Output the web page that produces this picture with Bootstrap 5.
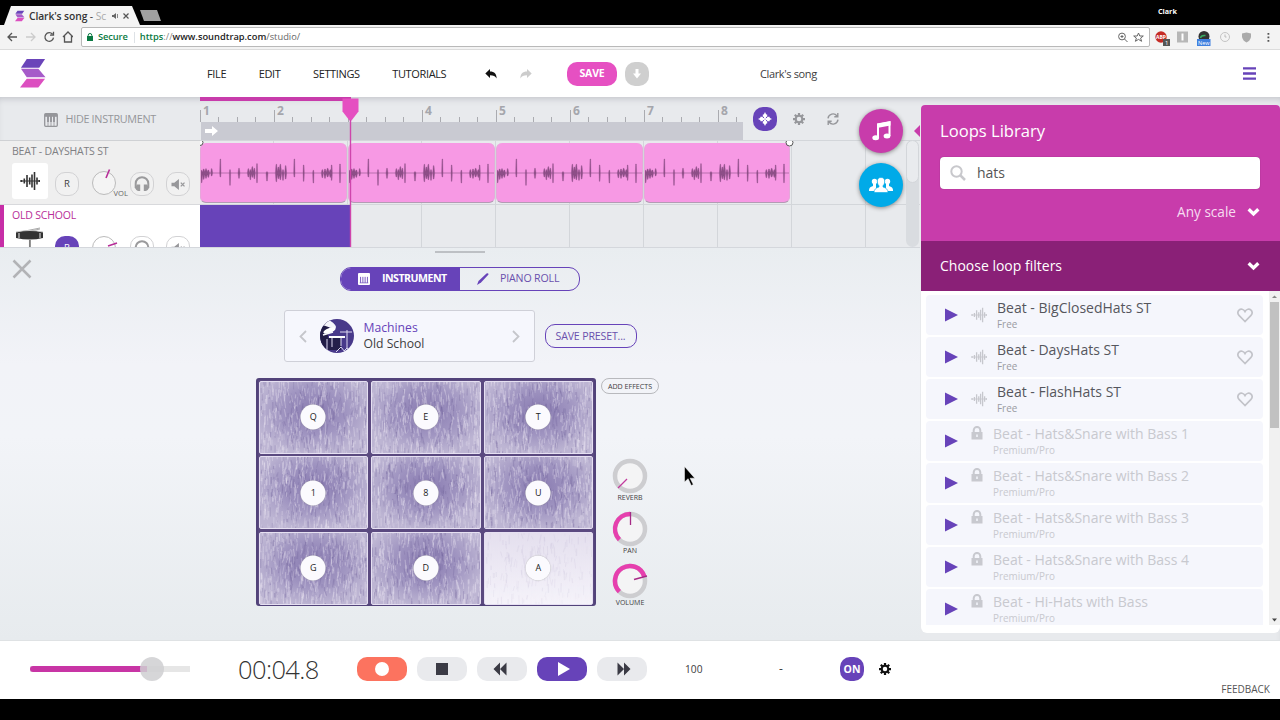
<!DOCTYPE html>
<html lang="en">
<head>
<meta charset="utf-8">
<meta name="viewport" content="width=device-width, initial-scale=1">
<title>Clark's song - Soundtrap</title>
<link href="https://cdn.jsdelivr.net/npm/bootstrap@5.3.0/dist/css/bootstrap.min.css" rel="stylesheet">
<style>
:root{--violet:#6743b9;--magenta:#c83cab;--pink:#e650c2;}
body{width:1280px;height:720px;overflow:hidden;background:#e8eaed;font-family:"Open Sans",sans-serif;font-size:12px;line-height:1.2;color:#3d3d40}
svg{display:block;flex:none}
.tabstrip{height:25px;background:#000}
.tabshape{width:136px;height:19px;margin-left:4px;background:#f4f4f4;clip-path:polygon(7px 0,128px 0,136px 100%,0 100%);padding-left:11px;font:600 10.3px "Open Sans",sans-serif;color:#333}
.newtab{width:21px;height:11px;background:#a0a0a0;clip-path:polygon(0 0,17px 0,21px 100%,4px 100%);margin-bottom:4px}
.addressbar{height:25px;background:#f3f3f3;border-bottom:1px solid #dcdcdc;padding-left:7px}
.omnibox{width:1069px;height:20px;margin:0 0 0 8px;background:#fff;border:1px solid #b9b9b9;border-radius:2px;font-weight:600;font-size:9.3px;padding:0 5px 0 5px}
.apphead{height:47px;background:#fff}
.apphead nav{width:438px;padding-left:160px;gap:32.5px;color:#222}
.apphead nav,.songname{font-size:11px;letter-spacing:-.36px}
.workspace{height:543px;background:#e8eaed;box-shadow:inset 0 5px 6px -3px #c4c6cc}
.timeline{height:150px;overflow:hidden}
.trackcol{width:200px}
.hide-inst{height:44px;border-bottom:1px solid #cfd1d4;padding:2px 0 0 44px;color:#95969a;gap:7.5px;font-size:10.8px;letter-spacing:-.3px}
.trackrow{height:64px;background:#efefef;border-bottom:1px solid #d8d9dc;padding:4px 0 0 12px}
.trackname{font-size:10.5px;letter-spacing:-.2px;height:14px;color:#808083}
.tile{width:36px;height:36px;background:#fff;border-radius:3px}
.ctl{width:24px;height:24px;border:1px solid #d2d2d4;border-radius:10px;background:#f1f1f1;font-size:9.5px}
.ruler{width:543px;height:25px}
.bar-cell{width:74px;height:25px;flex:none;font-weight:700;font-size:12px;color:#a5a6ac;padding:7px 0 0 3px;background:linear-gradient(#aaabb0,#aaabb0) 0 13px/1px 12px no-repeat,linear-gradient(#aaabb0,#aaabb0) 18px 20px/1px 5px no-repeat,linear-gradient(#aaabb0,#aaabb0) 37px 20px/1px 5px no-repeat,linear-gradient(#aaabb0,#aaabb0) 55px 20px/1px 5px no-repeat}
.loopband{width:542px;height:18px;margin-left:1px;background:#c9cad2;padding-left:4px}
.lanes{height:107px;border-top:1px solid #d3d6da;background:repeating-linear-gradient(90deg,transparent 0 73px,#d3d6da 73px 74px)}
.lane{height:64px;border-bottom:1px solid #d3d6da}
.clip{width:147px;height:60px;border-radius:6px;background:#f799e4;border:1px solid #e6a7da;border-bottom:1px solid #b39bb4;border-top:0;margin:2px 1px 0 0;flex:none;overflow:hidden}
.clip:last-child{width:146px}
.region{width:151px;height:42px;background:var(--violet)}
.fab{width:44px;height:44px;border-radius:50%;box-shadow:0 1px 4px #888}
.lane-scroll{left:706px;top:43px;width:13px;height:107px;border-radius:7px;background:#d9dce0}
.lane-thumb{height:43px;border-radius:7px;background:#e9ebee;border:1px solid #d3d6da}
.instrument{height:393px;border-top:1px solid #d4d7dc;background:linear-gradient(#e9edf0,#f2f3f8 30%,#f2f4f8 48%,#e7ebee)}
.grip{width:50px;height:2px;background:#bdc0c4;margin-top:3px}
.viewtabs{width:240px;height:24px;border:1px solid var(--violet);border-radius:11px;margin-top:13.5px;overflow:hidden;font-size:10.6px;color:#6a50ad}
.viewtabs>div{width:120px;letter-spacing:-.15px}
.viewtabs>.fw-bold{letter-spacing:-.5px}
.preset{width:251px;height:52px;border:1.5px solid #cfd0d8;border-radius:3px;background:#f6f7fd;font-size:12.2px}
.pillbtn{width:92px;height:24px;border:1px solid var(--violet);border-radius:10px;color:#6a50ad;font-size:10.6px;letter-spacing:-.15px}
.padgrid{width:340px;height:228px;display:grid;grid-template-columns:repeat(3,109.5px);grid-template-rows:repeat(3,73px);gap:2.6px 3px;background:#5b4a80;border:2px solid #52437a;border-radius:3px;padding:.5px .5px}
.pad{border:1px solid #e6e0f2;border-radius:2px;overflow:hidden}
.pad span{width:25px;height:25px;background:#fbfafe;border-radius:50%;font-size:9px;color:#222;box-shadow:0 0 1px #999}
.fx{width:58px;height:16px;border:1px solid #b8b9bd;border-radius:8px;font-size:7.1px}
.knob{width:36px;font-size:7px}
.drawer{width:359px;height:528px;border-radius:4px 4px 6px 6px;background:#fff;margin:8px 0 0 1px;overflow:hidden}
.drawer-head{height:136px;background:var(--magenta);color:#fff;padding:16px 20px 0 19px}
.searchbox{width:320px;height:32px;background:#fff;border-radius:4px;color:#555;font-size:14px;padding-left:10px;gap:11px;margin-top:16px;box-shadow:0 0 1px #6b2560}
.drawer-filter{height:50px;background:#8a2077;color:#fff;font-size:14px;padding:0 20px 0 19px}
.looplist{height:334px;padding:4px 0 0 5px;overflow:hidden;gap:2px}
.loopitem{width:337px;height:40px;flex:none;background:#f5f6fc;border-radius:4px;padding-left:19px;padding-right:10.5px}
.looptitle{font-size:14px;line-height:17px;color:#55565d}
.loopmeta{font-size:9.9px;line-height:13px;color:#999ba2;margin-top:1.5px}
.locked .looptitle,.locked .loopmeta{color:#c8c9cf}
.vscroll{width:11px;height:334px;background:#f1f1f1}
.vthumb{width:9px;height:126px;background:#c1c1c1}
.transport{height:59px;background:#fff;border-top:1px solid #dfe2e4;padding-bottom:2px}
.slider{width:160px;height:6px;background:#e6e6e6}
.slider i{display:block;width:117px;height:6px;background:#c835a5;border-radius:3px 0 0 3px}
.slider b{left:110px;top:-9px;width:24px;height:24px;border-radius:50%;background:#cfcfd1d9}
.clock{width:80px;font-size:25.5px;font-weight:300;color:#333;letter-spacing:-.6px}
.tbtn{width:50px;height:24px;border-radius:10px;background:#e9eaed}
.violet{background:var(--violet)!important;color:#fff}
.footer-bar{height:21px;background:#000}
</style>
</head>
<body class="d-flex flex-column">
<svg width="0" height="0" class="position-absolute">
 <defs>
  <symbol id="keys" viewBox="0 0 14 14"><rect x=".7" y=".7" width="12.600" height="12.600" rx="1" fill="none" stroke="currentColor" stroke-width="1.300"/><path d="M1 1h12v2.800H1Z" fill="currentColor"/><path d="M4 3v6M7 3v6M10 3v6" stroke="currentColor" stroke-width="1.900"/><path d="M4 9v4M7 9v4M10 9v4" stroke="currentColor" stroke-width=".8"/></symbol>
  <symbol id="keysolid" viewBox="0 0 14 14"><rect width="14" height="14" rx="1.200" fill="#fff"/><path d="M3 4.500v7M5.700 4.500v7M8.300 4.500v7M11 4.500v7" stroke="#6743b9" stroke-width="1"/><path d="M2 11.500h10" stroke="#6743b9" stroke-width=".8"/></symbol>
  <symbol id="wave" viewBox="0 0 20 20"><path d="M0 10h20" stroke="currentColor" stroke-width="1"/><path d="M1.500 9v2M4.300 7.500v5M7 4v12M9.700 6.500v7M12 3.500v13M14.500 1v18M17 6.500v7M19.200 9v2" stroke="currentColor" stroke-width="1.600" fill="none"/></symbol>
  <symbol id="phones" viewBox="0 0 16 16"><path d="M1.700 12V7.500a6.300 6.300 0 0 1 12.600 0V12" fill="none" stroke="#9a9a9c" stroke-width="2"/><path d="M3 8.500h3.200V15H4q-1.500 0-3-3ZM9.800 8.500H13l2 3.500q-1.500 3-3 3H9.800Z" fill="#9a9a9c"/></symbol>
  <symbol id="mute" viewBox="0 0 16 14"><path d="M1 5h3l5-4v12L4 9H1Z" fill="#97979a"/><path d="m11 5 4 4m0-4-4 4" stroke="#97979a" stroke-width="1.400"/></symbol>
  <symbol id="chev" viewBox="0 0 14 10"><path d="m1.800 2 5.200 5 5.200-5" fill="none" stroke="currentColor" stroke-width="3.600"/></symbol>
  <symbol id="gear" viewBox="0 0 16 16"><path d="M8 0v16M0 8h16M2.400 2.400l11.200 11.200M13.600 2.400 2.400 13.600" stroke="currentColor" stroke-width="3"/><circle cx="8" cy="8" r="5.800" fill="currentColor"/><circle cx="8" cy="8" r="3" fill="var(--hole)"/></symbol>
  <symbol id="lock" viewBox="0 0 12 14"><path d="M.5 6h11v7.500H.5Z" fill="#c8c9cf"/><path d="M2.700 6V4.200a3.300 3.300 0 0 1 6.600 0V6" fill="none" stroke="#c8c9cf" stroke-width="2"/><path d="M6 8.500v2.500" stroke="#f5f6fc" stroke-width="1.500"/></symbol>
  <symbol id="heart" viewBox="0 0 16 15"><path d="M8 13.500 2 7.300a3.500 3.500 0 0 1 0-5.200c1.700-1.500 4.500-1.200 6 1.400 1.500-2.600 4.300-2.900 6-1.400a3.500 3.500 0 0 1 0 5.200Z" fill="none" stroke="#c2c3c9" stroke-width="1.700"/></symbol>
  <symbol id="rew" viewBox="0 0 14 14"><path d="M7 .5v13L.5 7ZM13.500.5v13L7 7Z" fill="#3b3b45"/></symbol>
  <symbol id="reply" viewBox="0 0 12 10"><path d="M5 0v2.500c4.500 0 6.600 2.300 6.600 7-1.200-2.500-3.200-3.200-6.600-3.200V9L.3 4.400Z" fill="currentColor"/></symbol>
  <symbol id="brand" viewBox="0 0 28 30"><path d="M7 0h19l-6 9H1Z" fill="#6a44b9"/><path d="M1 10h18l7.500 9H7Z" fill="#a65bc9"/><path d="M7 20.500h19L19 29.500H0Z" fill="#dc4fc0"/></symbol>
 </defs>
</svg>

<div class="tabstrip d-flex align-items-end">
 <div class="tabshape d-flex align-items-center">
  <svg width="10" height="12"><use href="#brand"/></svg>
  <span class="text-nowrap" style="margin-left:4px;letter-spacing:-.1px">Clark's song <span class="fw-normal">-</span> <span class="fw-normal" style="color:#aaa">Sc</span></span>
  <svg class="ms-auto" width="18" height="8" viewBox="0 0 18 8"><path d="M0 3h1.500L4 1v6L1.500 5H0Z" fill="#666"/><path d="M5.500 2v4" stroke="#888"/><path d="m11.500 1.500 5 5m0-5-5 5" stroke="#555" stroke-width="1.200"/></svg>
  <span style="width:10px"></span>
 </div>
 <div class="newtab"></div>
 <div class="text-white fw-bold align-self-center" style="margin-left:997px;font-size:7.200px;margin-top:-2px">Clark</div>
</div>

<div class="addressbar d-flex align-items-center">
 <svg width="66" height="14" viewBox="0 0 66 14" fill="none" stroke="#555" stroke-width="1.300"><path d="M10 7H1m4-4L1 7l4 4"/><path d="M19 7h9m-4-4 4 4-4 4" stroke="#ccc"/><path d="M45.500 4.200a4.300 4.300 0 1 0 1 3.500M46.500 1.700v3.500H43"/><path d="m56 7 5-5 5 5M57.500 6v6h7V6"/></svg>
 <div class="omnibox d-flex align-items-center">
  <svg width="6" height="8" viewBox="0 0 6 8"><path d="M0 3h6v5H0Z" fill="#0b7a43"/><path d="M1.200 3V2.300a1.800 1.800 0 0 1 3.600 0V3" stroke="#0b7a43" fill="none"/></svg>
  <span style="color:#0b7a43;margin-left:5px;letter-spacing:-.1px">Secure</span><span class="border-start" style="height:11px;margin:0 5px 0 6px"></span><span style="color:#0b7a43">https</span><span class="fw-normal" style="color:#888">://</span><span style="color:#222">www.soundtrap.com</span><span class="fw-normal" style="color:#666">/studio/</span>
  <svg class="ms-auto" width="26" height="11" viewBox="0 0 26 11" fill="none" stroke="#666"><circle cx="4" cy="4.500" r="3.400"/><path d="m6.500 7 3 3M4 3v3M2.500 4.500h3M20.500 1l1.300 3h3.500l-2.700 2.100 1 3.200-3.100-1.900-3.100 1.900 1-3.200-2.700-2.100h3.500Z"/></svg>
 </div>
 <svg style="margin-left:3px" width="122" height="20" viewBox="0 0 122 20"><circle cx="8" cy="10" r="5.700" fill="#c52b25"/><text x="3" y="12" font-size="5" font-weight="bold" fill="#fff">ABP</text><path d="M10 12h7v7h-7Z" fill="#555"/><text x="12" y="18" font-size="6" fill="#fff">1</text><path d="M24 4.500h11v11H24Z" fill="#b7b7b7"/><path d="M29.500 6.500v7" stroke="#fff" stroke-width="2"/><circle cx="51" cy="9.500" r="5.500" fill="#333"/><path d="M47.500 11q.5-3 5-2.500" stroke="#37ae62" stroke-width="1.500" fill="none"/><path d="M44 12h13.500v7H44Z" fill="#3f80df"/><text x="45" y="17.500" font-size="5.500" fill="#fff">New</text><circle cx="72" cy="10" r="4.500" fill="none" stroke="#c4c4c4"/><path d="M72 7.500V10h1.500" stroke="#bbb" fill="none"/><path d="M93.500 5.500 98 6.500V10q-1 4-4.500 5.500Q90 14 89 10V6.500Z" fill="#aaa"/><path d="M114.500 6h1.800v1.800h-1.800Zm0 3.500h1.800v1.800h-1.800Zm0 3.500h1.800v1.800h-1.800Z" fill="#555"/></svg>
</div>

<header class="apphead d-flex align-items-center">
 <svg style="margin-left:20px" width="27" height="29"><use href="#brand"/></svg>
 <nav class="d-flex"><span>FILE</span><span>EDIT</span><span>SETTINGS</span><span>TUTORIALS</span></nav>
 <svg style="color:#111" width="12" height="10"><use href="#reply"/></svg>
 <svg style="margin-left:23px;color:#ccc;transform:scaleX(-1)" width="12" height="10"><use href="#reply"/></svg>
 <div class="d-flex align-items-center justify-content-center text-white fw-bold" style="width:50px;height:24px;border-radius:10px;background:var(--pink);margin-left:35px;font-size:10.500px;letter-spacing:-.2px">SAVE</div>
 <div class="d-flex align-items-center justify-content-center" style="width:24px;height:24px;border-radius:10px;background:#cfcfcf;margin-left:8px"><svg width="8" height="10" viewBox="0 0 8 10"><path d="M2.500 0h3v4.500H8L4 9.500 0 4.500h2.500Z" fill="#fff"/></svg></div>
 <span class="songname" style="margin-left:111px">Clark's song</span>
 <svg class="ms-auto me-4" width="13" height="13" viewBox="0 0 13 13"><path d="M0 1.300h13M0 6.500h13M0 11.700h13" stroke="#6743b9" stroke-width="2.300"/></svg>
</header>

<div class="workspace d-flex">
 <main class="position-relative" style="width:920px">
  <section class="timeline d-flex">
   <div class="trackcol">
    <div class="hide-inst d-flex align-items-center"><svg width="14" height="14"><use href="#keys"/></svg><span>HIDE INSTRUMENT</span></div>
    <div class="trackrow">
     <div class="trackname">BEAT - DAYSHATS ST</div>
     <div class="d-flex mt-1">
      <div class="tile d-flex align-items-center justify-content-center" style="color:#333"><svg width="20" height="20"><use href="#wave"/></svg></div>
      <div class="ctl d-flex align-items-center justify-content-center" style="margin:9px 0 0 7px">R</div>
      <svg style="margin:5px 0 0 12px" width="39" height="30" viewBox="0 0 39 30"><circle cx="13" cy="15" r="11.500" fill="#f4f4f4" stroke="#bbb"/><path d="m15 10 3.500-8.500" stroke="#b72d98" stroke-width="1.600"/><text x="22.500" y="27.500" font-size="7.600" fill="#666">VOL</text></svg>
      <div class="ctl d-flex align-items-center justify-content-center" style="margin-top:9px"><svg width="16" height="16"><use href="#phones"/></svg></div>
      <div class="ctl d-flex align-items-center justify-content-center" style="margin:9px 0 0 12px"><svg width="16" height="13"><use href="#mute"/></svg></div>
     </div>
    </div>
    <div class="trackrow" style="background:#fff;border-left:4px solid #c72ea7;padding-left:8px">
     <div class="trackname" style="color:#b72d98">OLD SCHOOL</div>
     <div class="d-flex mt-1">
      <svg width="36" height="36" viewBox="0 0 36 36"><path d="m8 5 20-4M14 5l14-3" stroke="#aaa"/><path d="M4 5q14-3 27 0v6q-13 3-27 0Z" fill="#333"/><path d="M4 5q14-3 27 0M17.500 13v12M7 6v5M28 6v5" stroke="#ccc" stroke-width="1.200" fill="none"/><path d="M18 13v12" stroke="#333"/></svg>
      <div class="ctl violet d-flex align-items-center justify-content-center" style="margin:9px 0 0 7px;border:0">R</div>
      <svg style="margin:5px 0 0 12px" width="39" height="30" viewBox="0 0 39 30"><circle cx="13" cy="16" r="11.500" fill="#fff" stroke="#bbb"/><path d="m17 14 9-3" stroke="#b72d98" stroke-width="1.600"/></svg>
      <div class="ctl bg-white d-flex align-items-center justify-content-center" style="margin-top:9px"><svg width="16" height="16"><use href="#phones"/></svg></div>
      <div class="ctl bg-white d-flex align-items-center justify-content-center" style="margin:9px 0 0 12px"><svg width="16" height="13"><use href="#mute"/></svg></div>
     </div>
    </div>
   </div>
   <div class="position-relative" style="width:720px">
    <div class="d-flex">
     <div>
      <div class="ruler d-flex overflow-hidden"><div class="bar-cell">1</div><div class="bar-cell">2</div><div class="bar-cell"></div><div class="bar-cell">4</div><div class="bar-cell">5</div><div class="bar-cell">6</div><div class="bar-cell">7</div><div class="bar-cell">8</div></div>
      <div class="loopband d-flex align-items-center"><svg width="13" height="10" viewBox="0 0 13 10"><path d="M0 3h7V0l6 5-6 5V7H0Z" fill="#fff"/></svg></div>
     </div>
     <div class="d-flex align-items-center" style="padding:1px 0 0 10px;color:#96979b;--hole:#e8eaed">
      <div class="violet d-flex align-items-center justify-content-center" style="width:24px;height:24px;border-radius:10px"><svg width="14" height="14" viewBox="0 0 14 14"><path d="m7 0 2.300 4.700L14 7 9.300 9.300 7 14 4.700 9.300 0 7l4.700-2.300Z" fill="#fff"/><path d="M3.200 4.800v4.400M10.800 4.800v4.400M4.800 3.200h4.400M4.800 10.800h4.400" stroke="#fff" stroke-width="1.600"/><path d="M5.400 5.400h.1m3 0h.1M5.400 8.600h.1m3 0h.1M7 7h.1" stroke="#6743b9" stroke-width="1.100" stroke-linecap="round"/></svg></div>
      <svg style="margin-left:16px" width="12" height="12"><use href="#gear"/></svg>
      <svg style="margin-left:22px" width="12" height="12" viewBox="0 0 12 12" fill="none" stroke="#96979b" stroke-width="1.400"><path d="M1 5.300A5 5 0 0 1 10 3M11 6.700A5 5 0 0 1 2 9M10.800 0v3.700H7.300M1.200 12V8.300h3.500"/></svg>
     </div>
    </div>
    <div class="lanes"><div class="lane d-flex" id="clips"></div><div class="region"></div></div>
    <div class="position-absolute" style="left:0;top:0;width:151px;height:4px;background:var(--magenta)"></div>
    <svg class="position-absolute" style="left:142px;top:0" width="17" height="150" viewBox="0 0 17 150"><path d="M.5 1.500h16v13l-7 9h-2L.5 14.500Z" fill="#e54fc1"/><path d="M8.500 23v127" stroke="#cf45ac" stroke-width="1.400"/></svg>
    <svg class="position-absolute overflow-hidden" style="left:0;top:44px" width="595" height="6"><g fill="#fff" stroke="#555"><circle cx="0" cy="1.500" r="3"/><circle cx="589.500" cy="1.500" r="3.500"/></g></svg>
    <div class="lane-scroll position-absolute"><div class="lane-thumb"></div></div>
    <div class="fab position-absolute d-flex align-items-center justify-content-center" style="left:659px;top:12px;background:var(--magenta)"><svg width="19" height="20" viewBox="0 0 19 20"><path d="M6 16.500V3.500l11.500-2V15" fill="none" stroke="#fff" stroke-width="2"/><path d="M5 2.500 18.500 0v4.500L5 7Z" fill="#fff"/><ellipse cx="3.700" cy="16.700" rx="3.400" ry="2.500" fill="#fff"/><ellipse cx="15" cy="15" rx="3.400" ry="2.500" fill="#fff"/></svg></div>
    <div class="fab position-absolute d-flex align-items-center justify-content-center" style="left:659px;top:66px;background:#00aae8"><svg width="24" height="16" viewBox="0 0 24 16" fill="#fff"><circle cx="5.500" cy="4.500" r="2.700"/><circle cx="18.500" cy="4.500" r="2.700"/><path d="M0 13q0-3 4-4V6h3v8H0ZM24 13q0-3-4-4V6h-3v8h7Z"/><path d="M12 .5q4 0 3.700 4.500-.2 2.500-1.700 3.800v1.200q5 1.300 5 5.500H5q0-4.200 5-5.500V8.800Q8.500 7.500 8.300 5 8 .5 12 .5Z" stroke="#00aae8" stroke-width=".6"/></svg></div>
    <svg class="position-absolute" style="left:714px;top:28px" width="6" height="12"><path d="M6 0v12L0 6Z" fill="#c83cab"/></svg>
   </div>
  </section>

  <section class="instrument d-flex flex-column align-items-center position-relative">
   <div class="grip"></div>
   <svg class="position-absolute" style="left:12px;top:11px" width="20" height="20"><path d="m1.500 1.500 17 17m0-17-17 17" stroke="#b2b3b6" stroke-width="2.500"/></svg>
   <div class="viewtabs d-flex">
    <div class="violet d-flex align-items-center fw-bold" style="padding-left:17px;gap:12px"><svg width="12" height="12"><use href="#keysolid"/></svg>INSTRUMENT</div>
    <div class="d-flex align-items-center" style="padding-left:17px;gap:11px"><svg width="12" height="12" viewBox="0 0 12 12"><path d="m0 12 1.500-4L9.500.5q2-.8 2 1L4 9.500Z" fill="#6743b9"/></svg>PIANO ROLL</div>
   </div>
   <div class="d-flex align-items-center" style="margin-top:19.500px;gap:10px">
    <div class="preset d-flex align-items-center" style="padding:0 14px">
     <svg width="8" height="13"><path d="M7 1 1.500 6.500 7 12" fill="none" stroke="#c5c6cb" stroke-width="1.800"/></svg>
     <svg style="margin:0 10px 0 13px" width="34" height="34" viewBox="0 0 34 34"><clipPath id="kc"><circle cx="17" cy="17" r="17"/></clipPath><g clip-path="url(#kc)"><path d="M0 0h34v34H0Z" fill="#48398a"/><path d="M0 0h10L6 34H0Z" fill="#211c46"/><path d="M7 19h14v12H7Z" fill="#241f4a"/><ellipse cx="9" cy="4.500" rx="8" ry="3" transform="rotate(32 9 4.500)" fill="#f5f5fa"/><ellipse cx="9.500" cy="11.500" rx="6.500" ry="2.500" transform="rotate(-20 9.500 11.500)" fill="#fff"/><path d="M2 5l9 3M3 16l10-3" stroke="#f5f5fa" stroke-width="1.500"/><path d="M9 18h16" stroke="#fff" stroke-width="2"/><path d="M20 13h12M12 19v9m9-9v8M7 20v12M27 11v18M16 33l5-5 4 5m2-4-3 3m3-3 4 3" stroke="#dcd8f0" stroke-width="1" fill="none"/></g></svg>
     <div style="line-height:16.500px"><div style="color:#6743b9">Machines</div><div>Old School</div></div>
     <svg class="ms-auto" width="8" height="13"><path d="M1 1l5.500 5.500L1 12" fill="none" stroke="#c5c6cb" stroke-width="1.800"/></svg>
    </div>
    <div class="pillbtn d-flex align-items-center justify-content-center">SAVE PRESET...</div>
   </div>
   <div class="d-flex align-self-start" style="margin:16px 0 0 256px;gap:5px">
    <div class="padgrid" id="pads"></div>
    <div class="d-flex flex-column align-items-center">
     <div class="fx d-flex align-items-center justify-content-center">ADD EFFECTS</div>
     <div class="knob text-center" style="margin-top:64px"><svg width="36" height="36" viewBox="0 0 36 36"><circle cx="18" cy="18" r="15" fill="#f4f4f5" stroke="#cdcdd0" stroke-width="4.500"/><path d="m15 21-9 9" stroke="#c23b9e" stroke-width="1.300"/></svg>REVERB</div>
     <div class="knob text-center" style="margin-top:8.500px"><svg width="36" height="36" viewBox="0 0 36 36"><circle cx="18" cy="18" r="15" fill="#f4f4f5" stroke="#cdcdd0" stroke-width="4.500"/><path d="M7.400 28.600A15 15 0 0 1 18 3" fill="none" stroke="#e63fae" stroke-width="4.500"/><path d="M18.500 1v13" stroke="#a62a86" stroke-width="1.300"/></svg>PAN</div>
     <div class="knob text-center" style="margin-top:8px"><svg width="36" height="36" viewBox="0 0 36 36"><circle cx="18" cy="18" r="15" fill="#f4f4f5" stroke="#cdcdd0" stroke-width="4.500"/><path d="M7.400 28.600A15 15 0 1 1 32.300 13.500" fill="none" stroke="#e63fae" stroke-width="4.500"/><path d="m22 16.500 13-3.500" stroke="#a62a86" stroke-width="1.300"/></svg>VOLUME</div>
    </div>
   </div>
   <svg class="position-absolute" style="left:684px;top:218px" width="11" height="20" viewBox="0 0 11 20"><path d="M.5.500v15.500l3.600-3.300 3.200 6.800 2-1-3.200-6.300h4.700Z" fill="#000" stroke="#fff" stroke-width=".5"/></svg>
  </section>
 </main>

 <aside class="drawer">
  <div class="drawer-head">
   <div style="font-size:16.600px;line-height:20px">Loops Library</div>
   <div class="searchbox d-flex align-items-center"><svg width="16" height="16"><circle cx="6.500" cy="6.500" r="5.200" fill="none" stroke="#c8c8cc" stroke-width="2"/><path d="m10.500 10.500 4.500 4.500" stroke="#c8c8cc" stroke-width="2.500"/></svg>hats</div>
   <div class="d-flex align-items-center justify-content-end" style="font-size:13.600px;margin-top:14px;gap:11px;line-height:17px;color:#f7dcf1">Any scale<svg width="13" height="10" class="text-white"><use href="#chev"/></svg></div>
  </div>
  <div class="drawer-filter d-flex align-items-center justify-content-between">Choose loop filters<svg width="13" height="10"><use href="#chev"/></svg></div>
  <div class="d-flex justify-content-between">
   <div class="looplist d-flex flex-column" id="loops"></div>
   <div class="vscroll d-flex flex-column align-items-center"><svg width="11" height="11"><path d="M3 7h5L5.500 4.500Z" fill="#888"/></svg><div class="vthumb"></div><svg class="mt-auto" width="11" height="11"><path d="M3 4.500h5L5.500 7.500Z" fill="#444"/></svg></div>
  </div>
 </aside>
</div>

<footer class="transport d-flex align-items-center">
 <div class="slider position-relative" style="margin-left:30px"><i></i><b class="position-absolute"></b></div>
 <div class="clock text-nowrap" style="margin-left:48px">00:04.8</div>
 <div class="d-flex" style="margin-left:38.500px;gap:10px">
  <div class="tbtn d-flex align-items-center justify-content-center" style="background:#fc735f"><svg width="14" height="14"><circle cx="7" cy="7" r="7" fill="#fff"/></svg></div>
  <div class="tbtn d-flex align-items-center justify-content-center"><svg width="12" height="12"><path d="M0 0h12v12H0Z" fill="#3b3b45"/></svg></div>
  <div class="tbtn d-flex align-items-center justify-content-center pe-1"><svg width="14" height="14"><use href="#rew"/></svg></div>
  <div class="tbtn violet d-flex align-items-center justify-content-center ps-1"><svg width="12" height="14"><path d="M0 0v14l12-7Z" fill="#fff"/></svg></div>
  <div class="tbtn d-flex align-items-center justify-content-center ps-1"><svg style="transform:scaleX(-1)" width="14" height="14"><use href="#rew"/></svg></div>
 </div>
 <span style="margin-left:38.500px;width:17px;font-size:10.200px">100</span>
 <span style="margin-left:77px;width:5px">-</span>
 <div class="violet d-flex align-items-center justify-content-center fw-bold" style="margin-left:56px;width:24px;height:24px;border-radius:10px;font-size:10.500px">ON</div>
 <svg style="margin-left:15px;color:#111;--hole:#fff" width="12" height="12"><use href="#gear"/></svg>
 <span class="ms-auto align-self-end" style="font-size:10px;margin:0 10px 2px 0;color:#555">FEEDBACK</span>
</footer>
<div class="footer-bar"></div>

<script>
// Audio peaks of one two-bar clip: [x, height above axis, depth below axis, half width]
const peaks=[[2,8,29,3],[8,12,19,4],[15,13,16,5],[22,9,13,4],[32,13,9,3],[58,42,12,2],[87,10,37,2],[114,14,16,3],[142,13,12,3],[148,10,20,3],[154,19,13,4],[160,14,17,3],[168,28,29,2],[198,4,24,3],[226,26,26,3],[232,18,17,4],[238,26,20,4],[246,10,22,3],[254,22,18,3],[280,42,12,2],[308,24,25,2],[337,8,30,2],[364,10,14,3],[372,12,16,4],[380,14,12,5],[388,10,13,4],[392,24,22,2],[417,27,29,2],[441,6,12,3]];
const wave=peaks.map(([x,u,d,w])=>`M${x-w} 0L${x-1} ${-u}h2L${x+w} 0L${x+1} ${d}h-2Z`).join('');
document.getElementById('clips').innerHTML=[0,1,2,3].map(()=>`<div class="clip"><svg width="148" height="60" viewBox="0 -90 444 180"><path d="M0 0h444" stroke="#9b5b93" stroke-width="2"/><path d="${wave}" fill="#8e4f88" stroke="#8e4f88" stroke-width="1"/></svg></div>`).join('');

// Brushed pad surfaces, darker towards the middle
let seed=11;const rnd=()=>(seed=(seed*16807)%2147483647)/2147483647;
function pad(key,light){
 let s='';
 for(let i=0;i<620;i++){
  const x=rnd()*110,y=rnd()*78-6,r=Math.hypot((x-55)/55,(y-30)/42),dark=rnd()>Math.min(.8,r*.6+.3);
  const dx=(rnd()-.5)*(r<.8?3.5:.4);
  s+=`<path d="M${x.toFixed(1)} ${y.toFixed(1)}l${dx.toFixed(1)} ${(3+rnd()*7).toFixed(1)}" stroke="${dark?'#6d5f98':'#ece7f4'}" stroke-opacity="${(dark?.28:.33)}" stroke-width="${(.6+rnd()*.8).toFixed(1)}"/>`;
 }
 return `<div class="pad position-relative" style="background:${light?'linear-gradient(#e4dfee,#f5f3fa)':'radial-gradient(ellipse 55% 60% at 50% 42%,#887ab0,#a095c1 55%,#bdb5d3)'}"><svg width="110" height="73" style="opacity:${light?.25:1}">${s}</svg><span class="position-absolute top-50 start-50 translate-middle d-flex align-items-center justify-content-center">${key}</span></div>`;
}
document.getElementById('pads').innerHTML=[...'QET18UGDA'].map(k=>pad(k,k==='A')).join('');

const loops=['BigClosedHats ST','DaysHats ST','FlashHats ST','Hats&amp;Snare with Bass 1','Hats&amp;Snare with Bass 2','Hats&amp;Snare with Bass 3','Hats&amp;Snare with Bass 4','Hi-Hats with Bass'];
document.getElementById('loops').innerHTML=loops.map((n,i)=>{
 const free=i<3;
 return `<div class="loopitem d-flex ${free?'':'locked'}"><svg style="margin-top:13px" width="13" height="14"><path d="M0 .5v13L13 7Z" fill="#6743b9"/></svg>`+
 (free?`<svg style="margin:12px 10px 0 13px;color:#c6c7cd" width="16" height="16"><use href="#wave"/></svg>`:`<svg style="margin:5px 10px 0 13px" width="12" height="14"><use href="#lock"/></svg>`)+
 `<div style="margin-top:4px"><div class="looptitle">Beat - ${n}</div><div class="loopmeta">${free?'Free':'Premium/Pro'}</div></div>`+
 (free?`<svg class="ms-auto" style="margin-top:12.500px" width="16" height="15"><use href="#heart"/></svg>`:'')+`</div>`;}).join('');
</script>
<script src="https://cdn.jsdelivr.net/npm/bootstrap@5.3.0/dist/js/bootstrap.bundle.min.js"></script>
</body>
</html>
